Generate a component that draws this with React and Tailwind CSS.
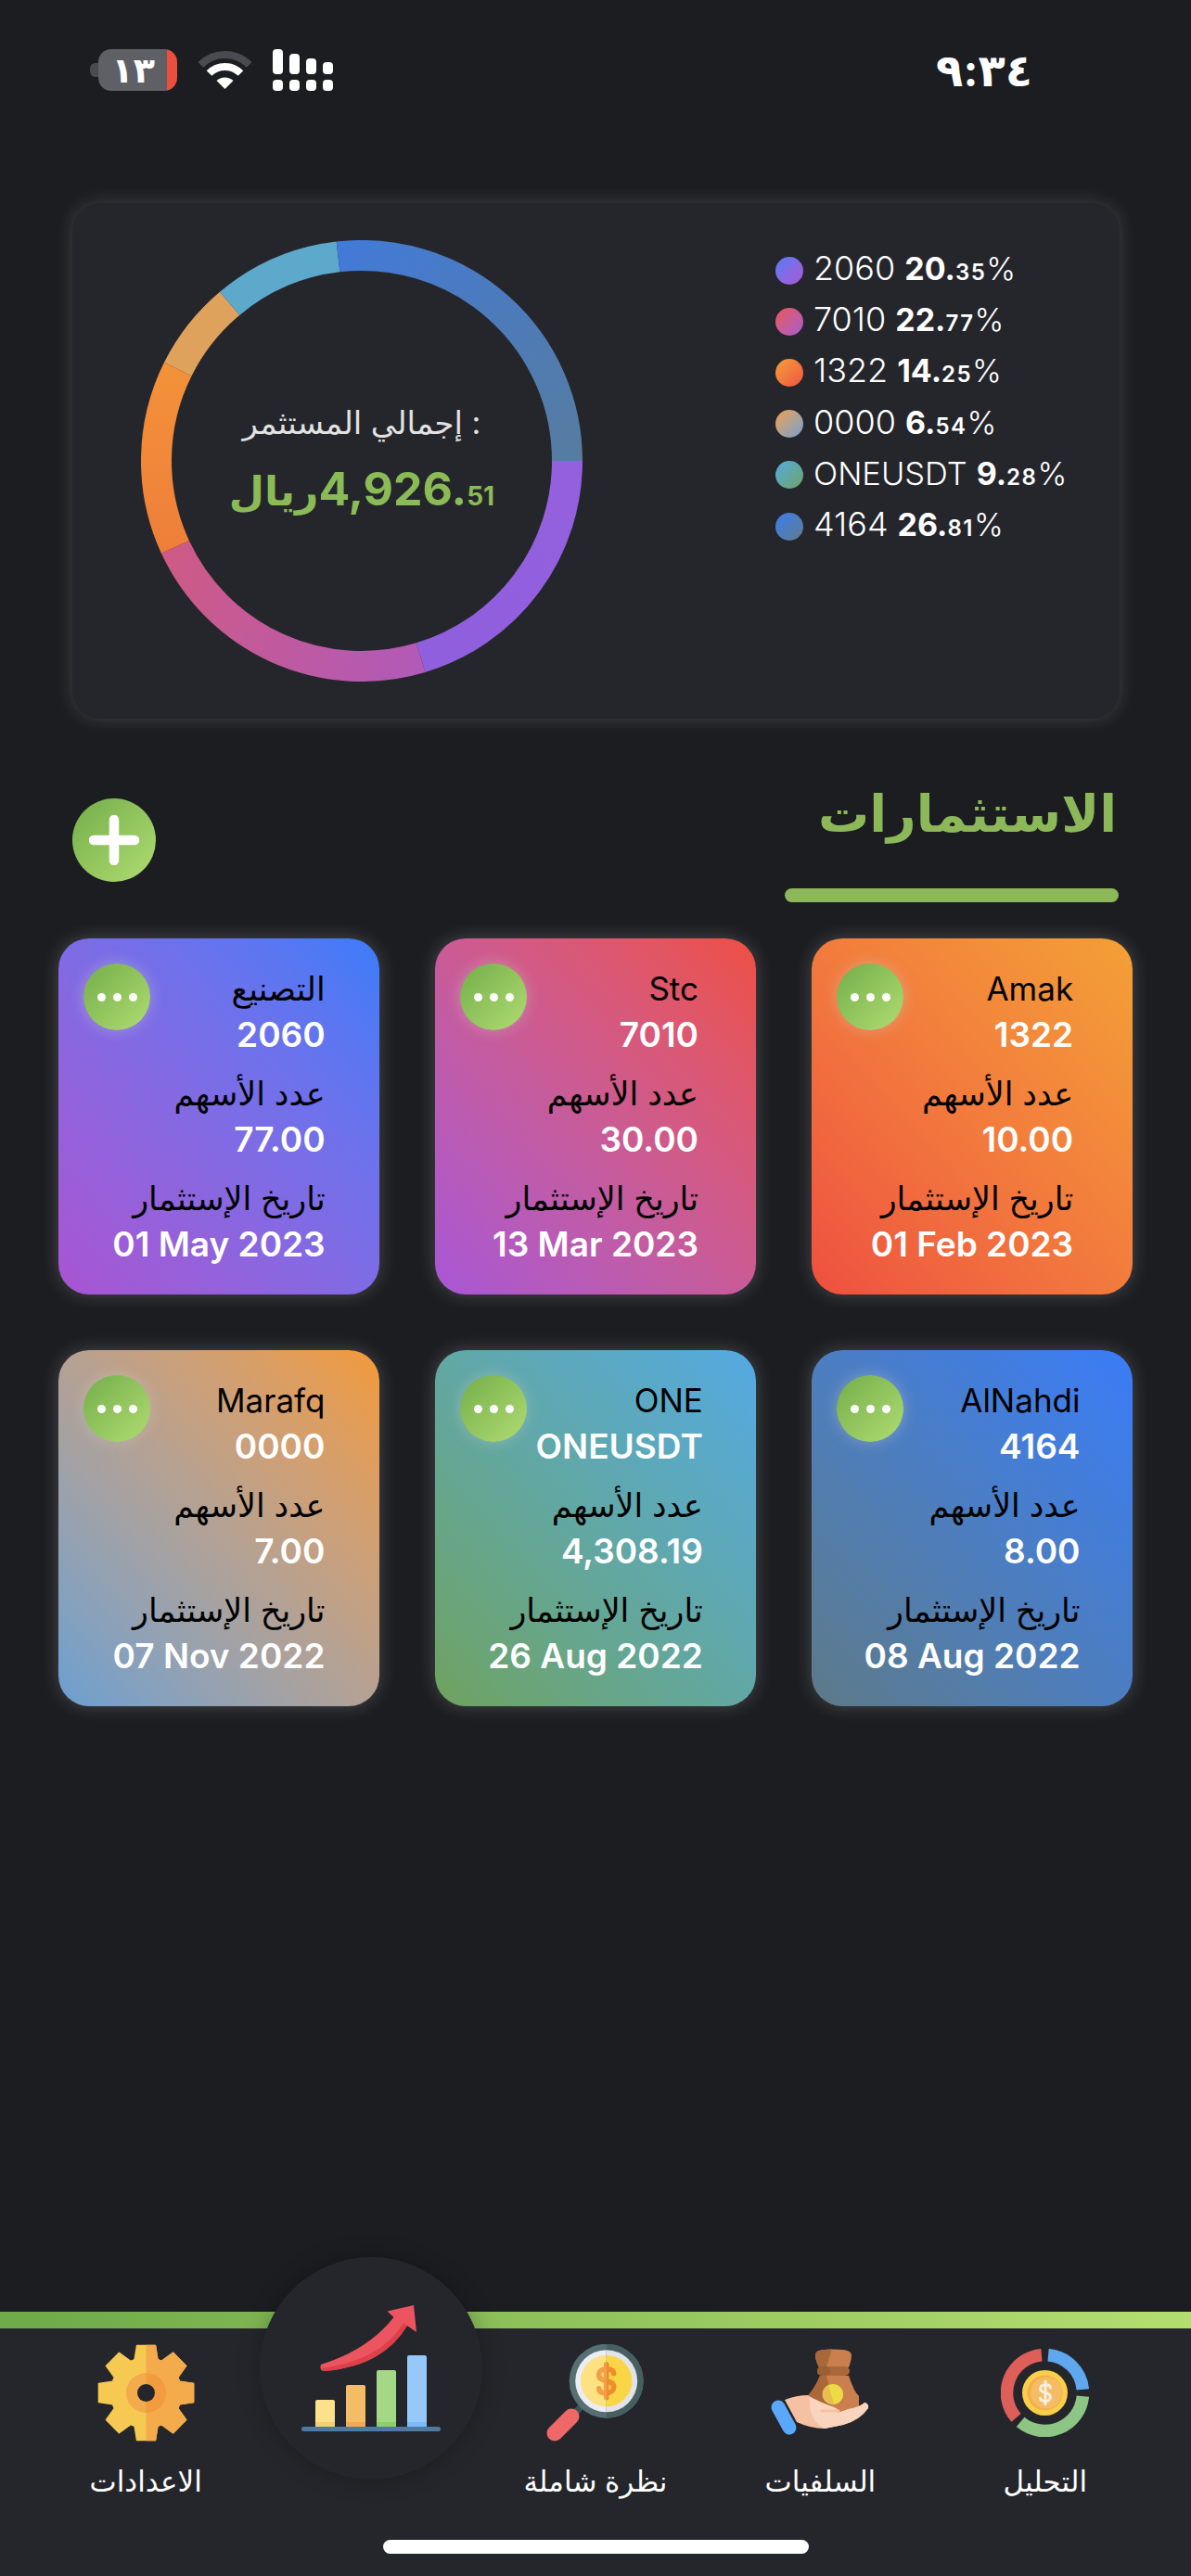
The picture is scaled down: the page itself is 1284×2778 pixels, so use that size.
import React from "react";

const FONT = "[font-family:Inter,'Noto_Sans','DejaVu_Sans',sans-serif]";

const pol = (cx, cy, r, deg) => {
  const a = ((deg - 90) * Math.PI) / 180;
  return [cx + r * Math.cos(a), cy + r * Math.sin(a)];
};
const arc = (cx, cy, r, s, e) => {
  const [x1, y1] = pol(cx, cy, r, s);
  const [x2, y2] = pol(cx, cy, r, e);
  return `M${x1} ${y1} A${r} ${r} 0 ${e - s > 180 ? 1 : 0} 1 ${x2} ${y2}`;
};

const segs = [
  { s: 90, e: 163.3, c1: "#9460DE", c2: "#8F5FDD", g: [476, 238, 250, 470] },
  { s: 163.3, e: 245.2, c1: "#B15AB9", c2: "#CE5A85", g: [310, 450, 30, 340] },
  { s: 245.2, e: 296.5, c1: "#EE7F3A", c2: "#F39139", g: [30, 330, 30, 140] },
  { s: 296.5, e: 320, c1: "#DFA25C", c2: "#DFA25C", g: [0, 0, 1, 1] },
  { s: 320, e: 353.4, c1: "#5CA9CB", c2: "#5CA9CB", g: [0, 0, 1, 1] },
  { s: 353.4, e: 450, c1: "#427AD8", c2: "#567C9F", g: [210, 10, 476, 238] },
];

function Donut() {
  return (
    <svg width="476" height="476" viewBox="0 0 476 476">
      <defs>
        {segs.map((g, i) => (
          <linearGradient key={i} id={`seg${i}`} gradientUnits="userSpaceOnUse" x1={g.g[0]} y1={g.g[1]} x2={g.g[2]} y2={g.g[3]}>
            <stop offset="0" stopColor={g.c1} />
            <stop offset="1" stopColor={g.c2} />
          </linearGradient>
        ))}
      </defs>
      {segs.map((g, i) => (
        <path key={i} d={arc(238, 238, 221.5, g.s, g.e)} fill="none" stroke={`url(#seg${i})`} strokeWidth="33" />
      ))}
    </svg>
  );
}

const legend = [
  { n: "2060", a: "20.", b: "35", dot: "from-[#4F7BF5] to-[#A855D3]", size: "text-[36px]" },
  { n: "7010", a: "22.", b: "77", dot: "from-[#EA5252] to-[#A958CF]", size: "text-[36px]" },
  { n: "1322", a: "14.", b: "25", dot: "from-[#F39D37] to-[#EE5240]", size: "text-[36px]" },
  { n: "0000", a: "6.", b: "54", dot: "from-[#EE9C42] to-[#6F9FCB]", size: "text-[36px]" },
  { n: "ONEUSDT", a: "9.", b: "28", dot: "from-[#55A8DE] to-[#6FA364]", size: "text-[34.5px]" },
  { n: "4164", a: "26.", b: "81", dot: "from-[#3B7BF0] to-[#5F7B8C]", size: "text-[36px]" },
];

const cards = [
  { name: "Amak", code: "1322", qty: "10.00", date: "01 Feb 2023", bg: "from-[#EE4F40] to-[#F3A036]" },
  { name: "Stc", code: "7010", qty: "30.00", date: "13 Mar 2023", bg: "from-[#A856D6] to-[#EE4F42]" },
  { name: "التصنيع", code: "2060", qty: "77.00", date: "01 May 2023", bg: "from-[#A954D1] to-[#3A7CF8]" },
  { name: "AlNahdi", code: "4164", qty: "8.00", date: "08 Aug 2022", bg: "from-[#5D7A88] to-[#3A7CF8]" },
  { name: "ONE", code: "ONEUSDT", qty: "4,308.19", date: "26 Aug 2022", bg: "from-[#6FA25F] to-[#55A9E2]" },
  { name: "Marafq", code: "0000", qty: "7.00", date: "07 Nov 2022", bg: "from-[#6C9FD0] to-[#F29A36]" },
];

function Card({ c }) {
  return (
    <div className={`relative flex h-[384px] w-[346px] justify-center rounded-[33px] bg-linear-to-tr pt-[30px] shadow-[0_0_20px_rgba(255,255,255,0.2)] ${c.bg}`}>
      <div className="absolute left-[27px] top-[27px] flex h-[72px] w-[72px] items-center justify-center gap-[8px] rounded-full bg-linear-to-br from-[#74AE4A] to-[#B0DC72] shadow-[0_0_16px_rgba(210,210,210,0.4)]">
        <span className="h-[9px] w-[9px] rounded-full bg-white" />
        <span className="h-[9px] w-[9px] rounded-full bg-white" />
        <span className="h-[9px] w-[9px] rounded-full bg-white" />
      </div>
      <div className="flex flex-col items-end gap-[15px] leading-[49px]">
        <div className="flex flex-col items-end">
          <div className="text-[35px] text-black">{c.name}</div>
          <div className="text-[37px] font-semibold text-white">{c.code}</div>
        </div>
        <div className="flex flex-col items-end">
          <div className="text-[35px] text-black">عدد الأسهم</div>
          <div className="text-[37px] font-semibold text-white">{c.qty}</div>
        </div>
        <div className="flex flex-col items-end">
          <div className="text-[35px] text-black">تاريخ الإستثمار</div>
          <div className="text-[37px] font-semibold text-white">{c.date}</div>
        </div>
      </div>
    </div>
  );
}

function Gear() {
  const pts = [];
  for (let i = 0; i < 8; i++) {
    const d = i * 45;
    pts.push(pol(52.5, 52.5, 38, d - 19), pol(52.5, 52.5, 52, d - 11), pol(52.5, 52.5, 52, d + 11), pol(52.5, 52.5, 38, d + 19));
  }
  const p = pts.map((q) => q.join(",")).join(" ");
  return (
    <svg width="105" height="105" viewBox="0 0 105 105">
      <defs>
        <clipPath id="gearR"><rect x="52.5" y="0" width="53" height="105" /></clipPath>
      </defs>
      <polygon points={p} fill="#F6CA52" stroke="#F6CA52" strokeWidth="1.5" strokeLinejoin="round" />
      <circle cx="52.5" cy="52.5" r="21.5" fill="#F3AB4B" />
      <g clipPath="url(#gearR)">
        <polygon points={p} fill="#F3AB4B" stroke="#F3AB4B" strokeWidth="1.5" strokeLinejoin="round" />
        <circle cx="52.5" cy="52.5" r="21.5" fill="#F29B3F" />
      </g>
      <circle cx="52.5" cy="52.5" r="9.5" fill="#25262B" />
    </svg>
  );
}

function Magnifier() {
  const S = "M8 -8 C8 -12 4 -13 0 -13 C-5 -13 -8 -10 -8 -6.5 C-8 -2 -4 -1 0 0 C4 1 8 2 8 6.5 C8 10 5 13 0 13 C-4 13 -8 12 -8 8";
  const dollar = (c) => (
    <g transform="translate(64.7 39.7)" fill="none" stroke={c} strokeWidth="5.5" strokeLinecap="round">
      <path d={S} />
      <path d="M0 -18 V18" />
    </g>
  );
  return (
    <svg width="105" height="105" viewBox="0 0 105 105">
      <defs>
        <clipPath id="magR"><rect x="64.7" y="0" width="41" height="105" /></clipPath>
      </defs>
      <path d="M27 78 L38 67" stroke="#3E5355" strokeWidth="7" />
      <path d="M9 96 L27 78" stroke="#EF6868" strokeWidth="17" strokeLinecap="round" />
      <circle cx="64.7" cy="39.7" r="40" fill="#566F72" />
      <circle cx="64.7" cy="39.7" r="33.5" fill="#ECEDF2" />
      <circle cx="64.7" cy="39.7" r="27.7" fill="#FDE183" />
      {dollar("#F59F45")}
      <g clipPath="url(#magR)">
        <circle cx="64.7" cy="39.7" r="40" fill="#47605F" />
        <circle cx="64.7" cy="39.7" r="33.5" fill="#E2E3E9" />
        <circle cx="64.7" cy="39.7" r="27.7" fill="#FAD646" />
        {dollar("#F28A2E")}
      </g>
    </svg>
  );
}

function Bag() {
  return (
    <svg width="130" height="120" viewBox="0 0 130 120">
      <path d="M65 42 H96 Q102 60 107 64 V78 L60 86 L50 66 Q60 55 65 42 Z" fill="#CB7F4E" />
      <path d="M65 42 H72 L80 72 L58 84 L50 66 Q60 55 65 42 Z" fill="#A9683A" />
      <path d="M60 20 Q60 14 70 14 Q80 13 90 14 Q99 15 99 20 Q99 25 96 33 L64 33 Q60 25 60 20 Z" fill="#CB7F4E" />
      <path d="M60 20 Q60 14 70 14 L78 13 L72 33 L64 33 Q60 25 60 20 Z" fill="#A9683A" />
      <rect x="62" y="32" width="35" height="10" rx="5" fill="#A8683B" />
      <rect x="62" y="32" width="14" height="10" rx="5" fill="#9C5E33" />
      <circle cx="79" cy="62" r="11" fill="#ECDB45" />
      <path d="M74 52 A11 11 0 0 0 74 72 Q80 73 80 72 Z" fill="#E5BF50" />
      <path d="M27 68 Q40 63 52 63 L55 65 Q68 72 80 76 Q86 78 84 82 L96 78 Q108 76 113 71 Q118 72 117 77 Q108 90 90 95 L70 99 Q55 99 40 92 Z" fill="#F6C1A3" />
      <path d="M54 65 Q68 72 80 76 Q86 78 84 82 L96 78 Q108 76 113 71 Q118 72 117 77 Q108 90 90 95 L70 99 Q52 90 54 65 Z" fill="#F9D5BF" />
      <path d="M67 80 H85" stroke="#F6C1A3" strokeWidth="3" strokeLinecap="round" />
      <path d="M20 76 L32 98" stroke="#5AA8FA" strokeWidth="15" strokeLinecap="round" />
    </svg>
  );
}

function DonutIcon() {
  return (
    <svg width="95" height="95" viewBox="0 0 95 95">
      <path d={arc(47.5, 47.5, 41, 5, 85)} fill="none" stroke="#5FA8F0" strokeWidth="13.5" />
      <path d={arc(47.5, 47.5, 41, 95, 220)} fill="none" stroke="#8DC585" strokeWidth="13.5" />
      <path d={arc(47.5, 47.5, 41, 229, 355)} fill="none" stroke="#DE5F5A" strokeWidth="13.5" />
      <circle cx="47.5" cy="47.5" r="24.5" fill="#F9CF4A" />
      <circle cx="47.5" cy="47.5" r="19" fill="#F4AE52" />
      <circle cx="49" cy="47.5" r="17" fill="#F5BC63" />
      <g transform="translate(48 47.5) scale(0.68)" fill="none" stroke="#F7EFDF" strokeWidth="4.5" strokeLinecap="round">
        <path d="M8 -8 C8 -12 4 -13 0 -13 C-5 -13 -8 -10 -8 -6.5 C-8 -2 -4 -1 0 0 C4 1 8 2 8 6.5 C8 10 5 13 0 13 C-4 13 -8 12 -8 8" />
        <path d="M0 -18 V18" />
      </g>
    </svg>
  );
}

function ChartIcon() {
  const bars = [
    [15, 102, "#FBE18A", "#F3CF76"],
    [48, 86, "#F4BC66", "#F3A955"],
    [81, 70, "#A5D884", "#8FCE6C"],
    [114, 54, "#97C8FA", "#7DBBF8"],
  ];
  return (
    <svg width="150" height="136" viewBox="0 0 150 136">
      <path d="M21 64 Q72 48 99.5 13 L92.5 6.5 L121 0 L124 29 L114 22 Q88 66 24 71 Q19 70 21 64 Z" fill="#EC5560" />
      <path d="M24 71 Q88 66 114 22 L110 19 Q85 60 21 68 Q21 70 24 71 Z" fill="#DD4048" />
      {bars.map(([x, y, c, d]) => (
        <g key={x}>
          <rect x={x} y={y} width="21" height={131 - y} rx="2" fill={c} />
          <rect x={x} y="126" width="21" height="5" fill={d} />
        </g>
      ))}
      <rect x="0" y="131" width="150" height="5" rx="2.5" fill="#4C7AA3" />
    </svg>
  );
}

function Wifi() {
  return (
    <svg width="59" height="42" viewBox="0 0 59 42">
      <path d={arc(29.5, 42, 37, -45, 45)} fill="none" stroke="#4A4B50" strokeWidth="8" />
      <path d={arc(29.5, 42, 24, -45, 45)} fill="none" stroke="#fff" strokeWidth="8" />
      <path d="M29.5 42 L20.5 33 A13 13 0 0 1 38.5 33 Z" fill="#fff" />
    </svg>
  );
}

function Signal() {
  const tops = [0, 5, 10, 14];
  return (
    <svg width="65" height="45" viewBox="0 0 65 45">
      {tops.map((t, i) => (
        <g key={i} fill="#fff">
          <rect x={i * 18} y={t} width="11" height={27 - t} rx="4" />
          <rect x={i * 18} y="33" width="11" height="12" rx="4" />
        </g>
      ))}
    </svg>
  );
}

const nav = [
  { label: "الاعدادات", icon: <Gear /> },
  { label: "", icon: null },
  { label: "نظرة شاملة", icon: <Magnifier /> },
  { label: "السلفيات", icon: <Bag /> },
  { label: "التحليل", icon: <DonutIcon /> },
];

export default function App() {
  return (
    <div className={`flex h-[2778px] w-[1284px] flex-col overflow-hidden bg-[#1C1D21] text-white ${FONT}`}>
      {/* status bar */}
      <div className="flex h-[219px] shrink-0 items-start justify-between pl-[97px] pr-[171px] pt-[53px]">
        <div className="flex items-start gap-[22px]">
          <div className="flex items-center">
            <div className="h-[15px] w-[9px] rounded-l-[6px] bg-[#4A4B50]" />
            <div className="relative flex h-[45px] w-[85px] items-center justify-end rounded-[14px] bg-linear-to-r from-[#5F6065] from-[87%] to-[#EA4E3C] to-[87%] pr-[24px]">
              <span className="text-[38px] font-semibold leading-[45px]">١٣</span>
            </div>
          </div>
          <div className="pt-px"><Wifi /></div>
          <Signal />
        </div>
        <div dir="ltr" className="text-[48px] font-bold leading-[46px]">٩:٣٤</div>
      </div>

      {/* summary card */}
      <div className="mx-[78px] flex h-[556px] w-[1129px] shrink-0 items-start rounded-[30px] bg-[#25262B] pl-[74px] pt-[40px] shadow-[0_0_20px_rgba(255,255,255,0.16)]">
        <div className="relative h-[476px] w-[476px] shrink-0">
          <Donut />
          <div className="absolute inset-0 flex flex-col items-center justify-center pt-[3px]">
            <div className="text-[34px] leading-[48px] text-[#E2E2E2]">إجمالي المستثمر :</div>
            <div dir="ltr" className="mt-[17px] flex items-baseline font-bold leading-[60px] text-[#8ABB57]">
              <span className="text-[44px]">ريال</span>
              <span className="text-[50px]">4,926.</span>
              <span className="text-[28px]">51</span>
            </div>
          </div>
        </div>
        <div className="ml-[208px] mt-[5px] flex flex-col">
          {legend.map((l) => (
            <div key={l.n} className="flex h-[55.2px] items-center gap-[12px]">
              <span className={`h-[30px] w-[30px] rounded-full bg-linear-to-br ${l.dot}`} />
              <div className={`-ml-[1px] font-light leading-[55px] text-white ${l.size}`}>
                {l.n}
                <span className="ml-[10px] text-[34px] font-bold">{l.a}</span>
                <span className="text-[24px] font-semibold tracking-[1.5px]">{l.b}</span>
                <span className="text-[34px]">%</span>
              </div>
            </div>
          ))}
        </div>
      </div>

      {/* section header */}
      <div className="mt-[86px] flex h-[135px] shrink-0 items-start justify-between px-[78px]">
        <div className="flex h-[90px] w-[90px] items-center justify-center rounded-full bg-linear-to-br from-[#74AE4A] to-[#B0DC72]">
          <svg width="54" height="54" viewBox="0 0 54 54">
            <path d="M27 5 V49 M5 27 H49" stroke="#fff" strokeWidth="10.5" strokeLinecap="round" />
          </svg>
        </div>
        <div className="flex w-[360px] flex-col items-end">
          <div className="-mt-[34px] h-[131px] pr-[2px] text-[55px] font-bold leading-[100px] text-[#8DB859]">الاستثمارات</div>
          <div className="h-[15px] w-[360px] rounded-full bg-[#8DB859]" />
        </div>
      </div>

      {/* investments */}
      <div className="mx-[48px] overflow-hidden px-[15px] pb-[40px] pt-[16px]">
        <div className="grid grid-cols-[346px_346px_346px] gap-y-[60px] justify-between" dir="rtl">
          {cards.map((c) => (
            <div key={c.code} dir="ltr"><Card c={c} /></div>
          ))}
        </div>
      </div>

      {/* bottom nav */}
      <div className="relative mt-auto shrink-0 bg-[#25262B]">
        <div className="h-[18px] bg-linear-to-r from-[#6EAA49] to-[#B5DE70]" />
        <div className="absolute left-[280px] top-[-59px] flex h-[240px] w-[240px] items-center justify-center rounded-full bg-[#25262B] shadow-[0_0_24px_rgba(0,0,0,0.25)]">
          <ChartIcon />
        </div>
        <div className="grid grid-cols-5 px-[36px] pt-[9px]">
          {nav.map((n, i) => (
            <div key={i} className="flex flex-col items-center">
              <div className="flex h-[120px] items-center justify-center">{n.icon}</div>
              <div className="mt-[16px] h-[41px] text-[31px] leading-[40px] text-white">{n.label}</div>
            </div>
          ))}
        </div>
        <div className="mx-auto mb-[24px] mt-[42px] h-[15px] w-[459px] rounded-full bg-white" />
      </div>
    </div>
  );
}
